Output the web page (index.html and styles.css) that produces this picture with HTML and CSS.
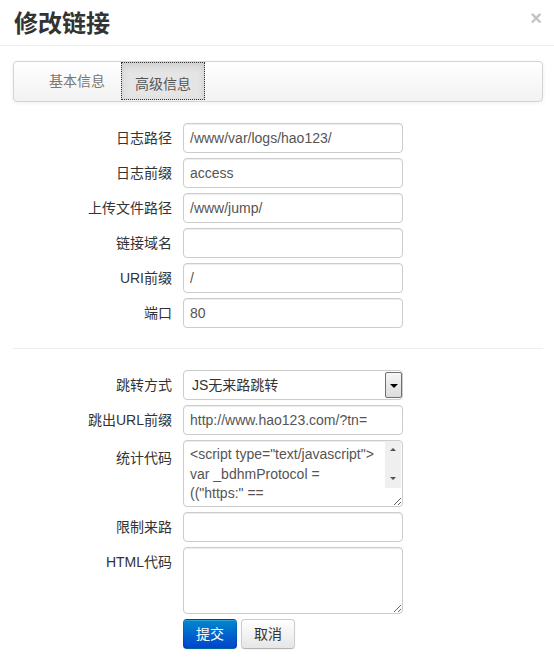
FILE: index.html
```html
<!DOCTYPE html>
<html lang="zh-CN">
<head>
<meta charset="utf-8">
<title>修改链接</title>
<link rel="stylesheet" href="styles.css">
</head>
<body>
<div class="modal">
  <div class="modal-header">
    <h3 class="modal-title">修改链接</h3>
    <button type="button" class="close">×</button>
  </div>
  <div class="modal-body">
    <div class="navbar">
      <ul class="nav">
        <li class="nav-item"><a class="nav-link">基本信息</a></li>
        <li class="nav-item active"><a class="nav-link">高级信息</a></li>
      </ul>
    </div>
    <form class="form">
      <div class="group">
        <div class="row"><label class="label">日志路径</label><input class="input" type="text" value="/www/var/logs/hao123/"></div>
        <div class="row"><label class="label">日志前缀</label><input class="input" type="text" value="access"></div>
        <div class="row"><label class="label">上传文件路径</label><input class="input" type="text" value="/www/jump/"></div>
        <div class="row"><label class="label">链接域名</label><input class="input" type="text" value=""></div>
        <div class="row"><label class="label">URI前缀</label><input class="input" type="text" value="/"></div>
        <div class="row"><label class="label">端口</label><input class="input" type="text" value="80"></div>
      </div>
      <hr class="divider">
      <div class="group">
        <div class="row"><label class="label">跳转方式</label>
          <div class="select-wrap">
            <select class="select"><option>JS无来路跳转</option></select>
            <span class="select-arrow"><span class="tri"></span></span>
          </div>
        </div>
        <div class="row"><label class="label">跳出URL前缀</label><input class="input" type="text" value="http://www.hao123.com/?tn="></div>
        <div class="row"><label class="label label-ta">统计代码</label>
          <div class="ta-wrap">
            <textarea class="textarea scroll">&lt;script type="text/javascript"&gt;
var _bdhmProtocol = (("https:" == document.location.protocol) ? " https://" : " http://");
document.write(unescape("%3Cscript src='" + _bdhmProtocol + "hm.baidu.com/h.js' type='text/javascript'%3E%3C/script%3E"));
&lt;/script&gt;</textarea>
            <span class="vscroll"><span class="arr arr-up"></span><span class="arr arr-down"></span></span>
          </div>
        </div>
        <div class="row"><label class="label">限制来路</label><input class="input" type="text" value=""></div>
        <div class="row"><label class="label">HTML代码</label><textarea class="textarea"></textarea></div>
        <div class="actions">
          <button type="button" class="btn btn-primary">提交</button>
          <button type="button" class="btn">取消</button>
        </div>
      </div>
    </form>
  </div>
</div>
</body>
</html>
```
FILE: styles.css
```css
* { box-sizing: border-box; }
html, body { margin: 0; padding: 0; background: #fff; }
body {
  font-family: "Liberation Sans", "Noto Sans CJK SC", sans-serif;
  font-size: 14px;
  line-height: 20px;
  color: #333;
}
.modal { width: 554px; }
.modal-header {
  display: flex;
  justify-content: space-between;
  align-items: flex-start;
  height: 46px;
  padding: 7px 12px 0 14px;
  border-bottom: 1px solid #eee;
}
.modal-title {
  margin: 0;
  font-family: "Noto Sans CJK SC", sans-serif;
  font-size: 24px;
  line-height: 30px;
  font-weight: bold;
  color: #333;
}
.close {
  margin: 1px 0 0;
  padding: 0;
  border: 0;
  background: none;
  font-family: "Liberation Sans", sans-serif;
  font-size: 20px;
  font-weight: bold;
  line-height: 20px;
  color: #c4c4c4;
}
.modal-body { padding: 15px 11px 20px 13px; }
.navbar {
  height: 41px;
  border: 1px solid #d4d4d4;
  border-radius: 4px;
  background: linear-gradient(#ffffff, #f2f2f2);
  box-shadow: 0 1px 4px rgba(0,0,0,0.065);
  padding-left: 21px;
}
.nav { list-style: none; margin: 0; padding: 0; display: flex; gap: 2px; }
.nav-link {
  display: block;
  height: 38px;
  padding: 9px 14px;
  color: #777;
  line-height: 20px;
}
.active .nav-link {
  padding: 12px 14px 6px;
  color: #555;
  background: #e5e5e5;
  box-shadow: inset 0 3px 8px rgba(0,0,0,0.125);
  outline: 1px dotted #333;
  outline-offset: -1px;
}
.form { margin-top: 21px; }
.group { display: flex; flex-direction: column; gap: 5px; }
.row { display: flex; align-items: flex-start; gap: 11px; }
.label {
  width: 159px;
  flex: none;
  text-align: right;
  padding-top: 5px;
  line-height: 20px;
  color: #333;
}
.label-ta { padding-top: 8px; }
.input, .textarea, .select {
  width: 220px;
  border: 1px solid #ccc;
  border-radius: 4px;
  font-family: "Liberation Sans", "Noto Sans CJK SC", sans-serif;
  font-size: 14px;
  color: #555;
  background: #fff;
  box-shadow: inset 0 1px 1px rgba(0,0,0,0.075);
  margin: 0;
}
.input { height: 30px; padding: 4px 6px; line-height: 20px; }
.textarea {
  height: 67px;
  padding: 4px 6px;
  line-height: 19.5px;
  resize: vertical;
  display: block;
}
.ta-wrap { position: relative; width: 220px; }
.scroll { overflow: hidden; padding-right: 27px; }
.vscroll {
  position: absolute;
  left: 202px;
  top: 1px;
  width: 16px;
  height: 47px;
  background: #efefef;
  border-top-right-radius: 3px;
}
.arr {
  position: absolute;
  left: 5px;
  width: 0; height: 0;
  border-left: 3px solid transparent;
  border-right: 3px solid transparent;
}
.arr-up { top: 7px; border-bottom: 3px solid #505050; }
.arr-down { top: 36px; border-top: 3px solid #505050; }
.divider {
  margin: 20px 0 21px;
  border: 0;
  border-top: 1px solid #eee;
  height: 0;
}
.select-wrap { position: relative; width: 220px; height: 30px; }
.select {
  display: block;
  height: 30px;
  padding: 0 0 0 8px;
  -webkit-appearance: none;
  appearance: none;
  box-shadow: none;
  color: #333;
}
.select-arrow {
  position: absolute;
  right: 1px;
  top: 2px;
  width: 17px;
  height: 26px;
  border: 1px solid #707070;
  border-radius: 2px;
  background: linear-gradient(#f6f6f6, #dcdcdc);
  display: flex;
  align-items: center;
  justify-content: center;
  pointer-events: none;
}
.tri {
  width: 0; height: 0;
  border-left: 4px solid transparent;
  border-right: 4px solid transparent;
  border-top: 4px solid #000;
  margin-top: 1px;
}
.actions { display: flex; gap: 4px; padding-left: 170px; }
.btn {
  height: 30px;
  width: 54px;
  padding: 4px 0;
  font-family: "Liberation Sans", "Noto Sans CJK SC", sans-serif;
  font-size: 14px;
  line-height: 20px;
  color: #333;
  text-align: center;
  border: 1px solid #ccc;
  border-bottom-color: #b3b3b3;
  border-radius: 4px;
  background: linear-gradient(#ffffff, #e6e6e6);
  box-shadow: inset 0 1px 0 rgba(255,255,255,0.2), 0 1px 2px rgba(0,0,0,0.05);
  margin: 0;
}
.btn-primary {
  color: #fff;
  border-color: rgba(0,0,0,0.1) rgba(0,0,0,0.1) rgba(0,0,0,0.25);
  background: linear-gradient(#0088cc, #0044cc);
}
```
